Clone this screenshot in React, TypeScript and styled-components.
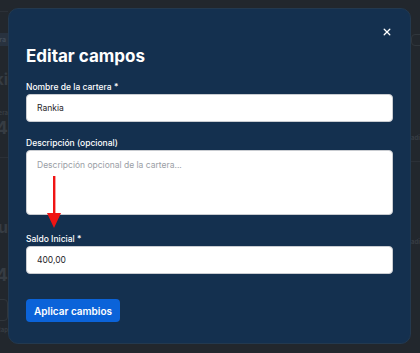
import styled, { createGlobalStyle } from "styled-components";

const GlobalStyle = createGlobalStyle`
  html, body {
    margin: 0;
    padding: 0;
    height: 100%;
    background: #22272d;
  }
  body {
    font-family: Inter, "Noto Sans", sans-serif;
    overflow: hidden;
  }
  #root {
    height: 100%;
  }
  * {
    box-sizing: border-box;
  }
`;

/* faded page behind the dialog */
const Page = styled.div`
  height: 100%;
  display: flex;
  justify-content: space-between;
  color: #363c43;
`;

const Gutter = styled.div<{ $side: "left" | "right" }>`
  width: ${(p) => (p.$side === "left" ? "8px" : "9px")};
  overflow: hidden;
  display: flex;
  flex-direction: column;
  --row-justify: ${(p) => (p.$side === "left" ? "flex-end" : "flex-start")};
`;

const GhostRow = styled.div<{ $h: number; $size?: number; $divider?: boolean }>`
  height: ${(p) => p.$h}px;
  flex-shrink: 0;
  display: flex;
  align-items: center;
  justify-content: var(--row-justify);
  white-space: nowrap;
  font-size: ${(p) => p.$size ?? 8}px;
  font-weight: 700;
  width: 100%;
  border-bottom: ${(p) => (p.$divider ? "1px solid #2b3037" : "none")};
`;

const GhostChip = styled.span`
  flex-shrink: 0;
  background: #28323f;
  color: #404b58;
  padding: 2px 2px;
  font-size: 7px;
`;

const GhostBox = styled.span<{ $h?: number }>`
  flex-shrink: 0;
  width: 14px;
  height: ${(p) => p.$h ?? 22}px;
  border: 1px solid #30363c;
  border-radius: 4px;
`;

/* dialog */
const Backdrop = styled.div`
  position: fixed;
  inset: 0;
  padding: 8px 9px 9px 8px;
  display: flex;
`;

const Modal = styled.div`
  position: relative;
  flex: 1;
  background: #14304f;
  border: 1px solid #23394f;
  border-radius: 10px;
  padding: 0 17px 21px;
  display: flex;
  flex-direction: column;
`;

const CloseButton = styled.button`
  position: absolute;
  top: 16px;
  right: 16px;
  width: 14px;
  height: 14px;
  padding: 0;
  border: none;
  background: none;
  display: flex;
  align-items: center;
  justify-content: center;
  cursor: pointer;
  & svg {
    width: 8px;
    height: 8px;
  }
`;

const Title = styled.h2`
  margin: 37px 0 15px;
  font-size: 17px;
  line-height: 20px;
  font-weight: 700;
  color: #ffffff;
`;

const Field = styled.div<{ $gap: number }>`
  position: relative;
  display: flex;
  flex-direction: column;
  margin-top: ${(p) => p.$gap}px;
`;

const Label = styled.label`
  font-size: 8.5px;
  line-height: 12px;
  font-weight: 500;
  color: #ffffff;
  margin-bottom: 1px;
`;

const Input = styled.input`
  height: 28px;
  border: 1px solid #c9ccd1;
  border-radius: 4px;
  background: #ffffff;
  padding: 0 10px;
  font-family: inherit;
  font-size: 8.5px;
  color: #1f2328;
  &:focus {
    outline: none;
  }
`;

const TextArea = styled.textarea`
  height: 65px;
  border: 1px solid #c9ccd1;
  border-radius: 4px;
  background: #ffffff;
  padding: 9px 10px;
  font-family: inherit;
  font-size: 8.5px;
  resize: none;
  &::placeholder {
    color: #9a9ea5;
  }
  &:focus {
    outline: none;
  }
`;

const Arrow = styled.div`
  position: absolute;
  left: 21px;
  bottom: calc(100% + 5px);
  width: 14px;
  height: 52px;
  & svg {
    display: block;
  }
`;

const SubmitButton = styled.button`
  align-self: flex-start;
  margin-top: 25px;
  height: 24px;
  padding: 0 8px;
  border: none;
  border-radius: 4px;
  background: #0b63d9;
  color: #ffffff;
  font-family: inherit;
  font-size: 10px;
  font-weight: 600;
  cursor: pointer;
`;

const App = () => {
  return (
    <>
      <GlobalStyle />
      <Page>
        <Gutter $side="left">
          <GhostRow $h={12} $divider />
          <GhostRow $h={20} />
          <GhostRow $h={14}>
            <GhostChip>Cartera</GhostChip>
          </GhostRow>
          <GhostRow $h={24} />
          <GhostRow $h={18} $size={16}>
            Ranki
          </GhostRow>
          <GhostRow $h={20} />
          <GhostRow $h={8} $size={6}>
            Valor de cartera
          </GhostRow>
          <GhostRow $h={22} $size={18}>
            4
          </GhostRow>
          <GhostRow $h={20} $divider />
          <GhostRow $h={60} />
          <GhostRow $h={18} $size={16}>
            Totalu
          </GhostRow>
          <GhostRow $h={28} />
          <GhostRow $h={20} $size={18}>
            4
          </GhostRow>
          <GhostRow $h={14} />
          <GhostRow $h={24}>
            <GhostBox />
          </GhostRow>
          <GhostRow $h={14} $size={6}>
            Rap
          </GhostRow>
        </Gutter>
        <Gutter $side="right">
          <GhostRow $h={34} />
          <GhostRow $h={12}>
            <GhostBox $h={12} />
          </GhostRow>
          <GhostRow $h={84} />
          <GhostRow $h={14} $size={6}>
            adicional
          </GhostRow>
          <GhostRow $h={18} $divider />
          <GhostRow $h={72} />
          <GhostRow $h={14} $size={6}>
            adicional
          </GhostRow>
        </Gutter>
      </Page>

      <Backdrop>
        <Modal>
          <CloseButton aria-label="Cerrar">
            <svg viewBox="0 0 10 10" fill="none" stroke="#ffffff" strokeWidth="1.6" strokeLinecap="round">
              <path d="M1.5 1.5l7 7M8.5 1.5l-7 7" />
            </svg>
          </CloseButton>
          <Title>Editar campos</Title>

          <Field $gap={0}>
            <Label>Nombre de la cartera *</Label>
            <Input defaultValue="Rankia" />
          </Field>

          <Field $gap={15}>
            <Label>Descripción (opcional)</Label>
            <TextArea placeholder="Descripción opcional de la cartera..." />
          </Field>

          <Field $gap={18}>
            <Arrow>
              <svg width="14" height="52" viewBox="0 0 14 52">
                <rect x="6" y="0" width="2.4" height="38" fill="#f01414" />
                <path d="M0 37h14L7 52z" fill="#f01414" />
              </svg>
            </Arrow>
            <Label>Saldo Inicial *</Label>
            <Input defaultValue="400,00" />
          </Field>

          <SubmitButton>Aplicar cambios</SubmitButton>
        </Modal>
      </Backdrop>
    </>
  );
};

export default App;
